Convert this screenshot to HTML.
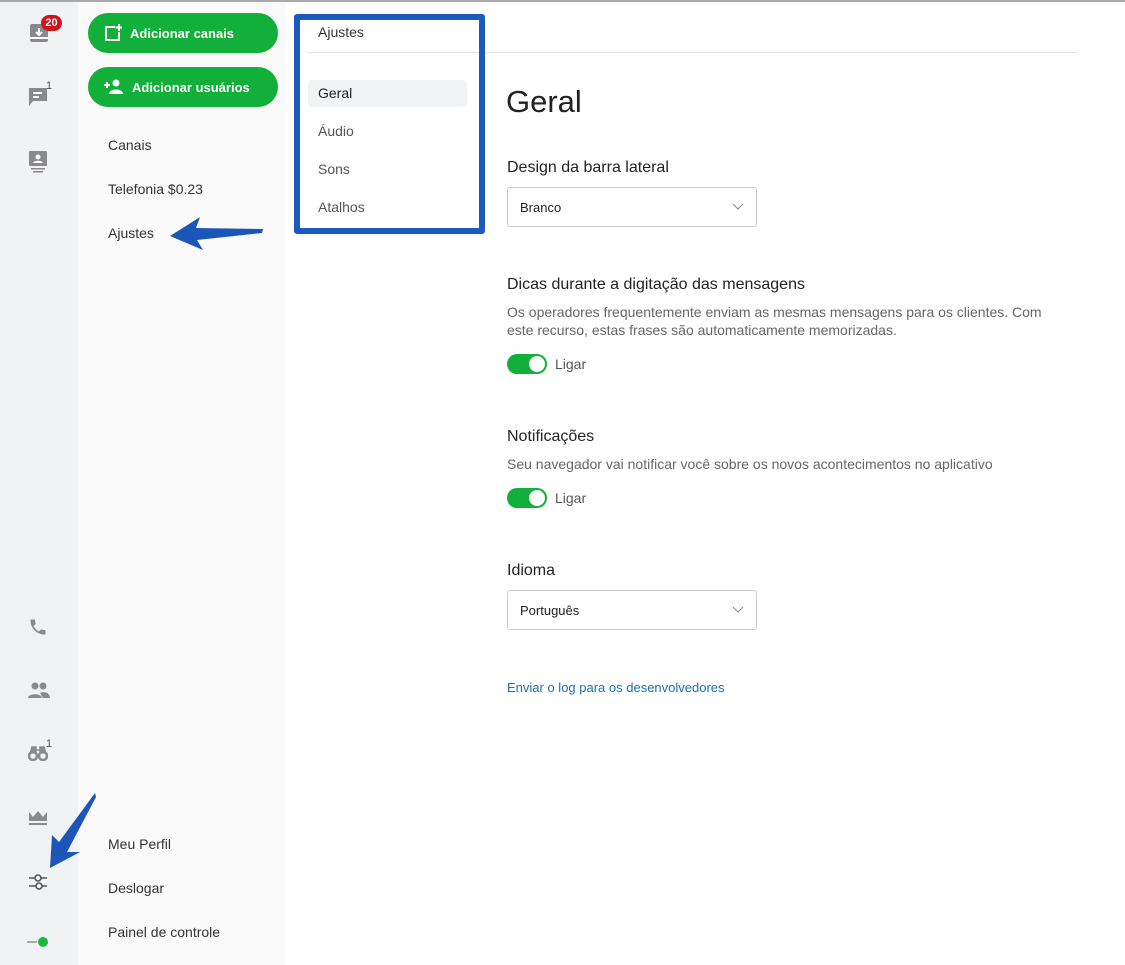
<!DOCTYPE html>
<html><head><meta charset="utf-8"><style>
*{margin:0;padding:0;box-sizing:border-box}
body{width:1125px;height:965px;position:relative;overflow:hidden;background:#fff;font-family:"Liberation Sans",sans-serif;color:#333}
.abs{position:absolute}
#topline{left:0;top:0;width:1125px;height:2px;background:#a9a9a9}
#rail{left:0;top:2px;width:78px;height:963px;background:#f1f2f4}
#panel{left:78px;top:2px;width:208px;height:963px;background:#fafafa}
.btn{position:absolute;left:88px;width:190px;height:40px;border-radius:20px;background:#12b03a;color:#fff;font-weight:bold;font-size:13px;display:flex;align-items:center;padding-left:16px}
.btn svg{margin-right:8px}
.nav{position:absolute;left:108px;font-size:14px;color:#333}
.sub{position:absolute;left:318px;font-size:14px;color:#555}
.ic{position:absolute;left:28px}
h1{position:absolute;left:506px;top:84px;font-size:31px;font-weight:300;color:#222}
.lbl{position:absolute;left:507px;font-size:16px;color:#222}
.desc{position:absolute;left:507px;font-size:14px;color:#666;line-height:18px;width:560px}
.sel{position:absolute;left:507px;width:250px;height:40px;border:1px solid #ccc;border-radius:3px;font-size:13px;color:#222;padding:12px 12px}
.sel svg{position:absolute;right:12px;top:15px}
.tog{position:absolute;left:507px;width:40px;height:20px;border-radius:10px;background:#12b03a}
.tog:after{content:"";position:absolute;right:2px;top:2px;width:16px;height:16px;border-radius:50%;background:#fff}
.tl{position:absolute;left:555px;font-size:14px;color:#555}
</style></head><body>
<div class="abs" id="topline"></div>
<div class="abs" id="rail"></div>
<div class="abs" id="panel"></div>

<!-- rail icons -->
<svg class="ic" style="top:22px" width="22" height="22" viewBox="0 0 22 22"><rect x="2" y="2" width="18" height="18" rx="2" fill="#8a8a8e"/><path d="M11 6v7M8 10l3 3 3-3" stroke="#fff" stroke-width="2" fill="none"/><rect x="2" y="15" width="18" height="2" fill="#fff"/></svg>
<div class="abs" style="left:41px;top:15px;width:21px;height:16px;border-radius:8px;background:#d0121b;color:#fff;font-size:11px;font-weight:bold;text-align:center;line-height:16px">20</div>
<svg class="ic" style="top:87px" width="20" height="20" viewBox="0 0 20 20"><path d="M1 1h18v13H5l-4 5z" fill="#8a8a8e"/><path d="M5 6h9M5 10h6" stroke="#fff" stroke-width="2"/></svg>
<div class="abs" style="left:46px;top:80px;font-size:11px;color:#555">1</div>
<svg class="ic" style="top:151px" width="20" height="22" viewBox="0 0 20 22"><rect x="1" y="0" width="18" height="15" rx="1" fill="#8a8a8e"/><circle cx="10" cy="6" r="2.5" fill="#fff"/><path d="M5 12c1-3 9-3 10 0z" fill="#fff"/><rect x="3" y="17" width="14" height="1.5" fill="#8a8a8e"/><rect x="5" y="20" width="10" height="1.5" fill="#8a8a8e"/></svg>
<svg class="ic" style="top:617px" width="20" height="20" viewBox="0 0 24 24"><path fill="#8a8a8e" d="M6.6 10.8c1.4 2.8 3.8 5.1 6.6 6.6l2.2-2.2c.3-.3.7-.4 1-.2 1.1.4 2.3.6 3.6.6.6 0 1 .4 1 1V20c0 .6-.4 1-1 1C10.6 21 3 13.4 3 4c0-.6.4-1 1-1h3.5c.6 0 1 .4 1 1 0 1.3.2 2.5.6 3.6.1.3 0 .7-.2 1z"/></svg>
<svg class="ic" style="top:682px" width="22" height="16" viewBox="0 0 22 16"><circle cx="7" cy="4" r="3.5" fill="#8a8a8e"/><circle cx="15" cy="4" r="3.5" fill="#8a8a8e"/><path d="M0 16c0-5 14-5 14 0zM12 11c3-2 10-1 10 5h-7z" fill="#8a8a8e"/></svg>
<svg class="ic" style="top:745px" width="20" height="16" viewBox="0 0 20 16"><circle cx="5" cy="11" r="4" fill="none" stroke="#8a8a8e" stroke-width="2.5"/><circle cx="15" cy="11" r="4" fill="none" stroke="#8a8a8e" stroke-width="2.5"/><path d="M2 9l2-7h4v6M18 9l-2-7h-4v6M8 5h4" fill="#8a8a8e" stroke="#8a8a8e" stroke-width="1.5"/></svg>
<div class="abs" style="left:46px;top:738px;font-size:11px;color:#555">1</div>
<svg class="ic" style="top:810px" width="20" height="16" viewBox="0 0 20 16"><path d="M1 2l4 5 5-6 5 6 4-5v9H1z" fill="#8a8a8e"/><rect x="1" y="13" width="18" height="2" fill="#8a8a8e"/></svg>
<svg class="ic" style="top:873px" width="20" height="18" viewBox="0 0 20 18"><path d="M1 5h18M1 13h18" stroke="#555" stroke-width="1.6"/><circle cx="10" cy="5" r="3" fill="#f1f2f4" stroke="#555" stroke-width="1.6"/><circle cx="11" cy="13" r="3" fill="#f1f2f4" stroke="#555" stroke-width="1.6"/></svg>
<div class="abs" style="left:27px;top:941px;width:10px;height:2px;background:#aaa"></div>
<div class="abs" style="left:38px;top:937px;width:10px;height:10px;border-radius:50%;background:#1cb83e"></div>

<!-- panel -->
<div class="btn" style="top:13px"><svg width="18" height="18" viewBox="0 0 18 18"><path d="M11 3H2v13h13V8" stroke="#fff" stroke-width="2" fill="none"/><path d="M15 0v7M11.5 3.5h7" stroke="#fff" stroke-width="2"/></svg>Adicionar canais</div>
<div class="btn" style="top:67px"><svg width="20" height="16" viewBox="0 0 20 16"><path d="M0 6h6M3 3v6" stroke="#fff" stroke-width="2"/><circle cx="12" cy="4" r="3.5" fill="#fff"/><path d="M5 15c0-6 14-6 14 0z" fill="#fff"/></svg>Adicionar usuários</div>
<div class="nav" style="top:137px">Canais</div>
<div class="nav" style="top:181px">Telefonia $0.23</div>
<div class="nav" style="top:225px">Ajustes</div>
<div class="nav" style="top:836px">Meu Perfil</div>
<div class="nav" style="top:880px">Deslogar</div>
<div class="nav" style="top:924px">Painel de controle</div>

<!-- settings nav -->
<div class="abs" style="left:308px;top:52px;width:770px;height:1px;background:#e6e6e6"></div>
<div class="abs" style="left:318px;top:24px;font-size:14px;color:#333">Ajustes</div>
<div class="abs" style="left:308px;top:80px;width:159px;height:27px;border-radius:4px;background:#f2f3f5"></div>
<div class="sub" style="top:85px;color:#222">Geral</div>
<div class="sub" style="top:123px">Áudio</div>
<div class="sub" style="top:161px">Sons</div>
<div class="sub" style="top:199px">Atalhos</div>
<div class="abs" style="left:294px;top:14px;width:191px;height:220px;border:6px solid #1b5bbd;border-radius:3px"></div>

<!-- main -->
<h1>Geral</h1>
<div class="lbl" style="top:159px">Design da barra lateral</div>
<div class="sel" style="top:187px">Branco<svg width="12" height="8" viewBox="0 0 12 8"><path d="M1 1l5 5 5-5" stroke="#888" fill="none"/></svg></div>
<div class="lbl" style="top:276px">Dicas durante a digitação das mensagens</div>
<div class="desc" style="top:303px">Os operadores frequentemente enviam as mesmas mensagens para os clientes. Com este recurso, estas frases são automaticamente memorizadas.</div>
<div class="tog" style="top:354px"></div><div class="tl" style="top:356px">Ligar</div>
<div class="lbl" style="top:428px">Notificações</div>
<div class="desc" style="top:455px">Seu navegador vai notificar você sobre os novos acontecimentos no aplicativo</div>
<div class="tog" style="top:488px"></div><div class="tl" style="top:490px">Ligar</div>
<div class="lbl" style="top:562px">Idioma</div>
<div class="sel" style="top:590px">Português<svg width="12" height="8" viewBox="0 0 12 8"><path d="M1 1l5 5 5-5" stroke="#888" fill="none"/></svg></div>
<div class="abs" style="left:507px;top:680px;font-size:13px;color:#1a6fb5">Enviar o log para os desenvolvedores</div>

<!-- arrows -->
<svg class="abs" style="left:0;top:0" width="1125" height="965">
<path d="M170 236 L200 217 L196 228 L263 229 L262 233 L197 240 L203 250 Z" fill="#1b56b8"/>
<path d="M50 868 L52 835 L59 842 L95 793 L96 797 L67 852 L80 852 Z" fill="#1b56b8"/>
</svg>
</body></html>
